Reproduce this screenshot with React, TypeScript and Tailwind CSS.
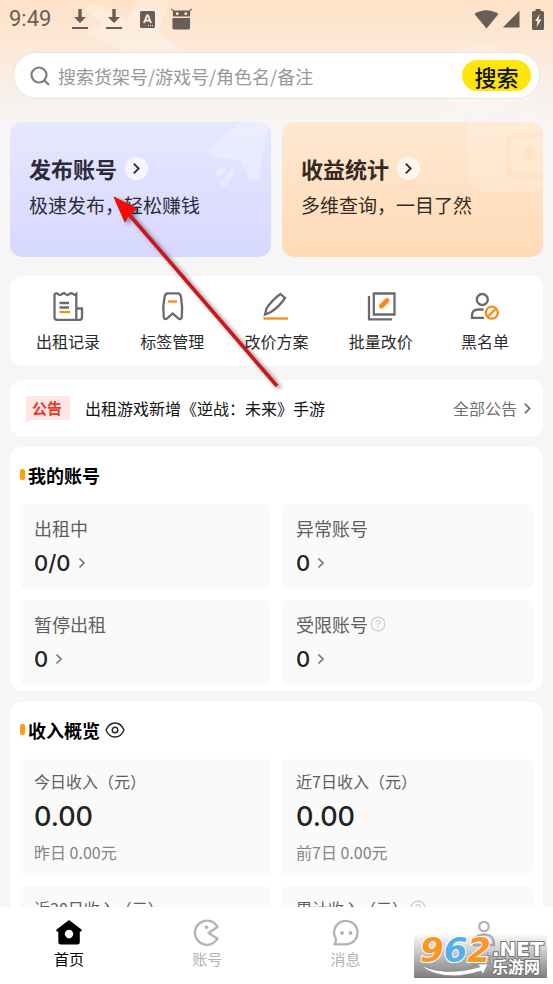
import type { ReactNode } from "react";

const GRAY = "#6b6b6b";
const ORANGE = "#fa8c16";

function Chevron({ size, className }: { size: number; className: string }) {
  return (
    <svg width={size} height={size} viewBox="0 0 12 12" className={className} fill="none" stroke="currentColor" strokeWidth="1.7">
      <path d="M3.5 1.500 L8 6 L3.5 10.500" />
    </svg>
  );
}

function StatusBar() {
  return (
    <div className="flex h-[38px] items-center justify-between pl-[9px] pr-[9px] text-[#685e55]">
      <div className="flex items-center">
        <span className="w-[63px] font-[Roboto,sans-serif] text-[22px] leading-6">9:49</span>
        {[0, 1].map((i) => (
          <svg key={i} width="16" height="22" viewBox="0 0 16 22" className="mr-[18px]" fill="currentColor">
            <path d="M6.300 1h3.400v8h4.300l-6 6-6-6h4.300z" />
            <path d="M0 19h16v2H0z" />
          </svg>
        ))}
        <svg width="15" height="17" viewBox="0 0 15 17" className="mr-[16px]">
          <rect width="15" height="17" rx="1.5" fill="currentColor" />
          <path d="M4 12 L7 4.500 H8 L11 12 M5 9.500 H10" fill="none" stroke="#fdebdb" strokeWidth="1.900" />
          <path d="M8 14.500h5" stroke="#fdebdb" strokeWidth="1" strokeDasharray="1 1" />
        </svg>
        <svg width="21" height="22" viewBox="0 0 22 22" fill="currentColor">
          <path d="M1 0 L3 2 H19 L21 0 L22 .8 L20 3 V8.500 H2 V3 L0 .8z" />
          <path d="M1.500 10h18.500v10.500a1.500 1.500 0 0 1-1.500 1.500H3a1.500 1.500 0 0 1-1.500-1.500z" />
          <circle cx="6.500" cy="5.500" r="1.500" fill="#fdebdb" />
          <circle cx="15.500" cy="5.500" r="1.500" fill="#fdebdb" />
        </svg>
      </div>
      <div className="flex items-center">
        <svg width="25" height="19" viewBox="0 0 25 19" fill="currentColor" className="mr-[3px]">
          <path d="M.500 4 Q12.500 -3.500 24.500 4 L12.500 18.500z" />
        </svg>
        <svg width="18" height="18" viewBox="0 0 18 18" fill="currentColor" className="mr-[12px]">
          <path d="M17.500 .8 V17.500 H.800z" />
        </svg>
        <svg width="12" height="21" viewBox="0 0 12 21">
          <path d="M3.500 0h5v2H10.500a1.500 1.500 0 0 1 1.500 1.500V19.500a1.500 1.500 0 0 1-1.500 1.500H1.500A1.500 1.500 0 0 1 0 19.500V3.500A1.500 1.500 0 0 1 1.500 2h2z" fill="currentColor" />
          <path d="M7.800 5 L3 12 H5.500 L4.500 18 L9.500 10.500 H6.500z" fill="#fdebdb" />
        </svg>
      </div>
    </div>
  );
}

function SearchBar() {
  return (
    <form className="mx-[13px] mt-[14px] flex h-[47px] items-center rounded-full border border-[#ebe4de] bg-white pl-[16px] pr-[8px]">
      <svg width="20" height="20" viewBox="0 0 20 20" fill="none" stroke="#7d7d7d" strokeWidth="2.200">
        <circle cx="9" cy="9" r="7.500" />
        <path d="M14.500 14.500 L19 19" />
      </svg>
      <input
        type="text"
        aria-label="搜索"
        placeholder="搜索货架号/游戏号/角色名/备注"
        className="ml-[8px] min-w-0 flex-1 bg-transparent text-[18px] leading-7 outline-none placeholder:text-[#989898]"
      />
      <button type="button" className="h-[31px] w-[69px] rounded-full bg-[#ffe60a] text-[22px] font-medium leading-[30px] text-[#111]">
        搜索
      </button>
    </form>
  );
}

function PromoCard({ title, text, className, art }: { title: string; text: string; className: string; art: ReactNode }) {
  return (
    <a href="#" className={`relative block h-[135px] overflow-hidden rounded-[12px] bg-linear-to-b pl-[19px] pt-[30px] ${className}`}>
      <div className="absolute right-0 top-0">{art}</div>
      <div className="flex h-[32px] items-center gap-[8px]">
        <h2 className="text-[22px] font-bold leading-8">{title}</h2>
        <span className="flex size-[23px] items-center justify-center rounded-full bg-white/70">
          <Chevron size={13} className="" />
        </span>
      </div>
      <p className="mt-[7px] text-[19px] leading-7">{text}</p>
    </a>
  );
}

const rocketArt = (
  <svg width="64" height="70" viewBox="0 0 64 70" fill="#fff" fillOpacity=".28">
    <path d="M34 0 H59 Q61 3 60 9 L52 54 Q49 62 42 57 L34 39 L8 35 Q-1 32 5 26z" />
    <path d="M16 44l3 3-5 7q-3 2-5-1-1-2 0-3zM25 47l4 3-10 14q-4 2-6-3z" />
  </svg>
);

const walletArt = (
  <svg width="78" height="70" viewBox="0 0 78 70" fill="none">
    <path d="M3 0 H78 V67 Q72 69 60 69 H20 Q2 68 2 48 V12 Q1 4 3 0z" fill="#fff" fillOpacity=".16" />
    <path d="M78 13 H52 Q43 13 43 22 V46 Q43 54 52 54 H78" stroke="#ffdcbc" strokeOpacity=".4" strokeWidth="5" />
    <circle cx="64" cy="32" r="6" fill="#ffdcbc" fillOpacity=".5" />
  </svg>
);

const quickItems: { label: string; icon: ReactNode }[] = [
  {
    label: "出租记录",
    icon: (
      <>
        <path d="M2.500 3.500 Q4 1.500 6 3 Q8 5 10 3 Q12 1.500 13.500 3 Q15.500 5 17.500 3 Q19 1.500 21 3 Q22.500 4.500 24.300 3 V28.800 H5 Q2.500 28.800 2.500 26.300z M24.300 17.500 H30 V26.300 Q30 28.800 27.500 28.800 H24" />
        <path d="M7.500 12 H17 M7.500 16.500 H17" />
        <path d="M7.500 21 H18" stroke={ORANGE} />
      </>
    ),
  },
  {
    label: "标签管理",
    icon: (
      <>
        <path d="M11 2.300 H22.500 Q24.500 3 25 6 Q26.800 16 25.800 26 Q25.300 29 22.500 27.500 L16.700 22.500 L11 27.500 Q8 29 7.700 26 Q6.500 16 8.500 6 Q9 3 11 2.300z" />
        <path d="M12 10.500 H21" stroke={ORANGE} />
      </>
    ),
  },
  {
    label: "改价方案",
    icon: (
      <>
        <path d="M20.500 3 L25 7 Q19 16 11 21 L5 23.500 L6.500 17.500 Q12 9 20.500 3z" />
        <path d="M3.500 27.500 H28" stroke={ORANGE} />
      </>
    ),
  },
  {
    label: "批量改价",
    icon: (
      <>
        <path d="M8.800 2.500 H29.500 V23.500 H8.800z M4 5 V28.300 H27" />
        <path d="M16.500 15 L22 9.500" stroke={ORANGE} strokeWidth="5" strokeLinecap="round" />
      </>
    ),
  },
  {
    label: "黑名单",
    icon: (
      <>
        <circle cx="13.300" cy="8.500" r="5.500" />
        <path d="M14.500 18.500 H9 Q3.500 18.500 3 24 V26.800 H15" />
        <circle cx="22.800" cy="21.700" r="6" stroke={ORANGE} />
        <path d="M19 25.500 L26.500 18" stroke={ORANGE} />
      </>
    ),
  },
];

function QuickMenu() {
  return (
    <nav className="mt-[19px] grid h-[90px] grid-cols-5 rounded-[12px] bg-white px-[6px] pt-[15px]">
      {quickItems.map((item) => (
        <a key={item.label} href="#" className="flex flex-col items-center">
          <svg width="32" height="32" viewBox="0 0 32 32" fill="none" stroke={GRAY} strokeWidth="2.300">
            {item.icon}
          </svg>
          <span className="mt-[6px] text-[16px] leading-6 text-[#2a2a2a]">{item.label}</span>
        </a>
      ))}
    </nav>
  );
}

function Notice() {
  return (
    <div className="mt-[14px] flex h-[56px] items-center rounded-[12px] bg-white pl-[16px] pr-[9px]">
      <span className="relative h-[24px] w-[44px] bg-[#fee6e4] pr-[2px] text-center text-[15px] font-bold leading-6 text-[#e8392f]">
        公告
        <span className="absolute left-0 top-full border-r-4 border-t-3 border-r-transparent border-t-[#fee6e4]" />
      </span>
      <a href="#" className="ml-[15px] flex-1 text-[16px] leading-6 text-[#111]">
        出租游戏新增《逆战：未来》手游
      </a>
      <a href="#" className="flex items-center gap-[4px] text-[16px] leading-6 text-[#6f6f6f]">
        全部公告
        <Chevron size={13} className="text-[#777]" />
      </a>
    </div>
  );
}

function Section({ title, extra, children }: { title: string; extra?: ReactNode; children: ReactNode }) {
  return (
    <section className="mt-[11px] shrink-0 rounded-[12px] bg-white px-[10px] pb-[6px] pt-[14px]">
      <div className="flex h-[27px] items-center">
        <span className="mr-[3px] h-[11px] w-[5px] rounded-[2px] bg-[#ff9d0a]" />
        <h2 className="text-[18px] font-bold leading-7 text-black">{title}</h2>
        {extra}
      </div>
      <div className="mt-[16px] grid grid-cols-2 gap-[11px]">{children}</div>
    </section>
  );
}

function HelpIcon() {
  return (
    <svg width="16" height="16" viewBox="0 0 16 16" fill="none" stroke="#c8c8c8" strokeWidth="1.100" className="ml-[2px]">
      <circle cx="8" cy="8" r="6.900" />
      <path d="M6 6.500 Q6 4.500 8 4.500 Q10 4.500 10 6.200 Q10 7.200 8 8.300 V9.500 M8 10.800 V12" />
    </svg>
  );
}

function AccountTile({ label, value, help }: { label: string; value: string; help?: boolean }) {
  return (
    <a href="#" className="block h-[85px] rounded-[6px] bg-[#fafafa] pl-[14px] pt-[10px]">
      <div className="flex items-center text-[18px] leading-7 text-[#5e5e5e]">
        {label}
        {help && <HelpIcon />}
      </div>
      <div className="mt-[7px] flex items-center gap-[5px] font-[Inter,sans-serif] text-[22px] font-medium leading-7 text-[#222]">
        {value}
        <Chevron size={12} className="text-[#777]" />
      </div>
    </a>
  );
}

function IncomeTile({ label, value, note, help }: { label: string; value: string; note: string; help?: boolean }) {
  return (
    <div className="h-[116px] rounded-[6px] bg-[#fafafa] pl-[14px] pt-[10px]">
      <div className="flex items-center text-[16px] leading-6 text-[#5e5e5e]">
        {label}
        {help && <HelpIcon />}
      </div>
      <div className="mt-[8px] font-[Inter,sans-serif] text-[27px] font-medium leading-8 text-[#222]">{value}</div>
      <div className="mt-[7px] text-[16px] leading-6 text-[#858585]">{note}</div>
    </div>
  );
}

const tabs: { label: string; active?: boolean; icon: ReactNode }[] = [
  {
    label: "首页",
    active: true,
    icon: (
      <path
        fill="currentColor"
        stroke="none"
        fillRule="evenodd"
        d="M14 1 L26.500 10.500 Q27.500 12.500 24.800 12.800 V23 Q24.800 25.500 22.300 25.500 H5.700 Q3.300 25.500 3.300 23 V12.800 Q.500 12.500 1.500 10.500z M14 10.800 a4.200 4.200 0 1 0 .01 0z"
      />
    ),
  },
  {
    label: "账号",
    icon: (
      <>
        <path d="M24.500 8 A12 12 0 1 0 24.500 19.500 L15.500 14z" strokeLinejoin="round" />
        <circle cx="13.500" cy="8.300" r="1.800" fill="currentColor" stroke="none" />
      </>
    ),
  },
  {
    label: "消息",
    icon: (
      <>
        <path d="M2.500 25.300 Q4.500 23 3.700 19.500 A11.700 11.700 0 1 1 14.300 25.300z" strokeLinejoin="round" />
        <circle cx="10" cy="14" r="1.900" fill="currentColor" stroke="none" />
        <circle cx="18.600" cy="14" r="1.900" fill="currentColor" stroke="none" />
      </>
    ),
  },
  {
    label: "我的",
    icon: (
      <>
        <circle cx="14" cy="7.500" r="4.700" />
        <path d="M4 26 Q4 15.500 14 15.500 Q24 15.500 24 26z" />
      </>
    ),
  },
];

function TabBar() {
  return (
    <nav className="grid h-[77px] shrink-0 grid-cols-4 bg-white pt-[12px]">
      {tabs.map((tab) => (
        <a key={tab.label} href="#" className={`flex flex-col items-center ${tab.active ? "text-black" : "text-[#b3b3b3]"}`}>
          <svg width="28" height="28" viewBox="0 0 28 28" fill="none" stroke="currentColor" strokeWidth="2.300">
            {tab.icon}
          </svg>
          <span className="text-[15px] leading-6">{tab.label}</span>
        </a>
      ))}
    </nav>
  );
}

function Watermark() {
  return (
    <div className="pointer-events-none absolute bottom-[6px] right-[6px] h-[45px] w-[133px] bg-linear-to-b from-[#999]/0 to-[#7d7d7d]">
      <svg width="133" height="45" viewBox="0 0 133 45" className="absolute inset-0">
        <path d="M6 32 Q30 44 66 34 L64 31 L74 31 L69 41 L67 38 Q28 50 6 32z" fill="#fff" stroke="#888" strokeWidth=".600" />
      </svg>
      <div className="absolute left-[6px] top-[-1px] font-['DejaVu_Sans',sans-serif] text-[34px] font-bold italic leading-9 text-[#ff9420] [-webkit-text-stroke:2px_#fff] [paint-order:stroke_fill]">
        9<span className="text-[#56b0e6]">6</span>2
      </div>
      <div className="absolute left-[78px] top-[4px] font-['DejaVu_Sans',sans-serif] text-[20px] font-bold leading-6 text-white [-webkit-text-stroke:2px_#777] [paint-order:stroke_fill]">
        .NET
      </div>
      <div className="absolute left-[78px] top-[23px] text-[16px] font-bold leading-5 text-white [-webkit-text-stroke:2px_#777] [paint-order:stroke_fill]">
        乐游网
      </div>
    </div>
  );
}

function PointerArrow() {
  return (
    <svg width="180" height="204" viewBox="0 0 180 204" className="pointer-events-none absolute left-[107px] top-[190px] drop-shadow-[3px_2px_2px_rgba(0,0,0,0.45)]">
      <path d="M20 22 L170 196" stroke="#d01518" strokeWidth="3.600" />
      <path d="M7 7 L30 19 L22 24 L18 32z" fill="#f90808" stroke="#e01010" strokeWidth="1" />
    </svg>
  );
}

export default function App() {
  return (
    <div className="relative flex h-screen flex-col overflow-hidden bg-[#f6f6f6] font-['Noto_Sans_CJK_SC',sans-serif]">
      <div className="absolute inset-x-0 top-0 h-[124px] bg-linear-to-b from-[#ffe1c6] to-[#f7f5f4]">
        <svg width="190" height="52" viewBox="0 0 190 52" className="absolute left-0 top-0" fill="#fff" fillOpacity=".28">
          <path d="M85 10 Q92 0 101 5 L128 20 L137 0 H170 L157 34 L184 52 H128 L86 33 L102 24z" />
        </svg>
        <svg width="110" height="82" viewBox="0 0 110 82" className="absolute right-[12px] top-[42px]" fill="none" stroke="#fff" strokeOpacity=".28">
          <circle cx="50" cy="38" r="26" strokeWidth="18" />
          <path d="M20 82 Q20 46 60 46 Q100 46 100 82" strokeWidth="20" strokeOpacity=".15" />
        </svg>
      </div>
      <header className="relative shrink-0">
        <StatusBar />
        <SearchBar />
      </header>
      <main className="relative flex min-h-0 flex-1 flex-col overflow-hidden px-[10px] pt-[23px]">
        <div className="grid shrink-0 grid-cols-2 gap-[11px]">
          <PromoCard title="发布账号" text="极速发布，轻松赚钱" className="from-[#e7e7ff] to-[#d7d8ff] text-[#2b2b3a]" art={rocketArt} />
          <PromoCard title="收益统计" text="多维查询，一目了然" className="from-[#ffe8d1] to-[#ffdbb8] text-[#35291f]" art={walletArt} />
        </div>
        <div className="shrink-0">
          <QuickMenu />
          <Notice />
        </div>
        <Section title="我的账号">
          <AccountTile label="出租中" value="0/0" />
          <AccountTile label="异常账号" value="0" />
          <AccountTile label="暂停出租" value="0" />
          <AccountTile label="受限账号" value="0" help />
        </Section>
        <Section
          title="收入概览"
          extra={
            <button type="button" aria-label="显示或隐藏收入" className="ml-[5px]">
              <svg width="20" height="16" viewBox="0 0 20 16" fill="none" stroke="#222" strokeWidth="1.400" className="block">
                <path d="M1 8 Q4 1 10 1 Q16 1 19 8 Q16 15 10 15 Q4 15 1 8z" />
                <circle cx="10" cy="8" r="2.800" />
              </svg>
            </button>
          }
        >
          <IncomeTile label="今日收入（元）" value="0.00" note="昨日 0.00元" />
          <IncomeTile label="近7日收入（元）" value="0.00" note="前7日 0.00元" />
          <IncomeTile label="近30日收入（元）" value="0.00" note="前30日 0.00元" />
          <IncomeTile label="累计收入（元）" value="0.00" note="总计 0.00元" help />
        </Section>
      </main>
      <TabBar />
      <PointerArrow />
      <Watermark />
    </div>
  );
}
